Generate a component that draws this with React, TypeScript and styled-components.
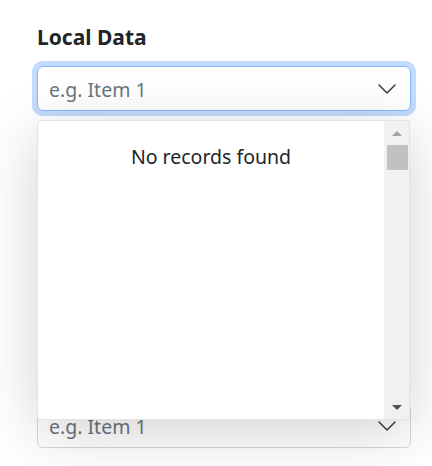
import styled, { createGlobalStyle } from "styled-components";

const GlobalStyle = createGlobalStyle`
  html, body {
    margin: 0;
    padding: 0;
    background: #ffffff;
  }
  body {
    font-family: "Noto Sans", "Open Sans", sans-serif;
    color: #212529;
  }
`;

const Page = styled.div`
  padding: 24px 21px 0 37px;
  height: 466px;
  box-sizing: border-box;
  overflow: hidden;
`;

const Label = styled.div`
  font-size: 21px;
  line-height: 26px;
  font-weight: 700;
  color: #212529;
  margin-bottom: 16px;
`;

const Field = styled.div<{ $focused?: boolean }>`
  position: relative;
  margin-top: ${(p) => (p.$focused ? "0" : "292px")};
`;

const SelectBox = styled.div<{ $focused?: boolean }>`
  box-sizing: border-box;
  height: 45px;
  display: flex;
  align-items: center;
  justify-content: space-between;
  padding: 1px 14px 0 11px;
  border: 1px solid ${(p) => (p.$focused ? "#86b7fe" : "#d6d9dc")};
  border-radius: 6px;
  background: #ffffff;
  box-shadow: ${(p) => (p.$focused ? "0 0 0 5px rgba(13, 110, 253, 0.25)" : "none")};
`;

const Placeholder = styled.span`
  font-size: 19.5px;
  color: #6c757d;
`;

const Chevron = () => (
  <svg width="18" height="10" viewBox="0 0 18 10" fill="none">
    <path d="M1 1l8 8 8-8" stroke="#343a40" strokeWidth="1.5" strokeLinecap="round" strokeLinejoin="round" />
  </svg>
);

const Dropdown = styled.div`
  position: absolute;
  z-index: 10;
  top: 54px;
  left: 0;
  width: 373px;
  height: 300px;
  box-sizing: border-box;
  display: flex;
  background: #ffffff;
  border: 1px solid #e3e3e3;
  border-radius: 4px 0 0 4px;
  box-shadow: 0 12px 60px rgba(0, 0, 0, 0.18);
  overflow: hidden;
`;

const List = styled.div`
  flex: 1;
  padding-top: 22px;
  text-align: center;
  font-size: 19.5px;
  line-height: 28px;
  color: #212529;
`;

const Scrollbar = styled.div`
  width: 24px;
  display: flex;
  flex-direction: column;
  align-items: center;
  background: #f1f1f1;
  border-left: 1px solid #f1f1f1;
`;

const Arrow = styled.div<{ $down?: boolean }>`
  width: 0;
  height: 0;
  margin: ${(p) => (p.$down ? "auto 0 9px" : "10px 0 9px")};
  border-left: 5px solid transparent;
  border-right: 5px solid transparent;
  ${(p) =>
    p.$down
      ? "border-top: 5px solid #505050;"
      : "border-bottom: 5px solid #a3a3a3;"}
`;

const Thumb = styled.div`
  width: 21px;
  height: 25px;
  background: #c1c1c1;
`;

export default function App() {
  return (
    <>
      <GlobalStyle />
      <Page>
        <Label>Local Data</Label>
        <Field $focused>
          <SelectBox $focused>
            <Placeholder>e.g. Item 1</Placeholder>
            <Chevron />
          </SelectBox>
          <Dropdown>
            <List>No records found</List>
            <Scrollbar>
              <Arrow />
              <Thumb />
              <Arrow $down />
            </Scrollbar>
          </Dropdown>
        </Field>
        <Field>
          <SelectBox>
            <Placeholder>e.g. Item 1</Placeholder>
            <Chevron />
          </SelectBox>
        </Field>
      </Page>
    </>
  );
}
